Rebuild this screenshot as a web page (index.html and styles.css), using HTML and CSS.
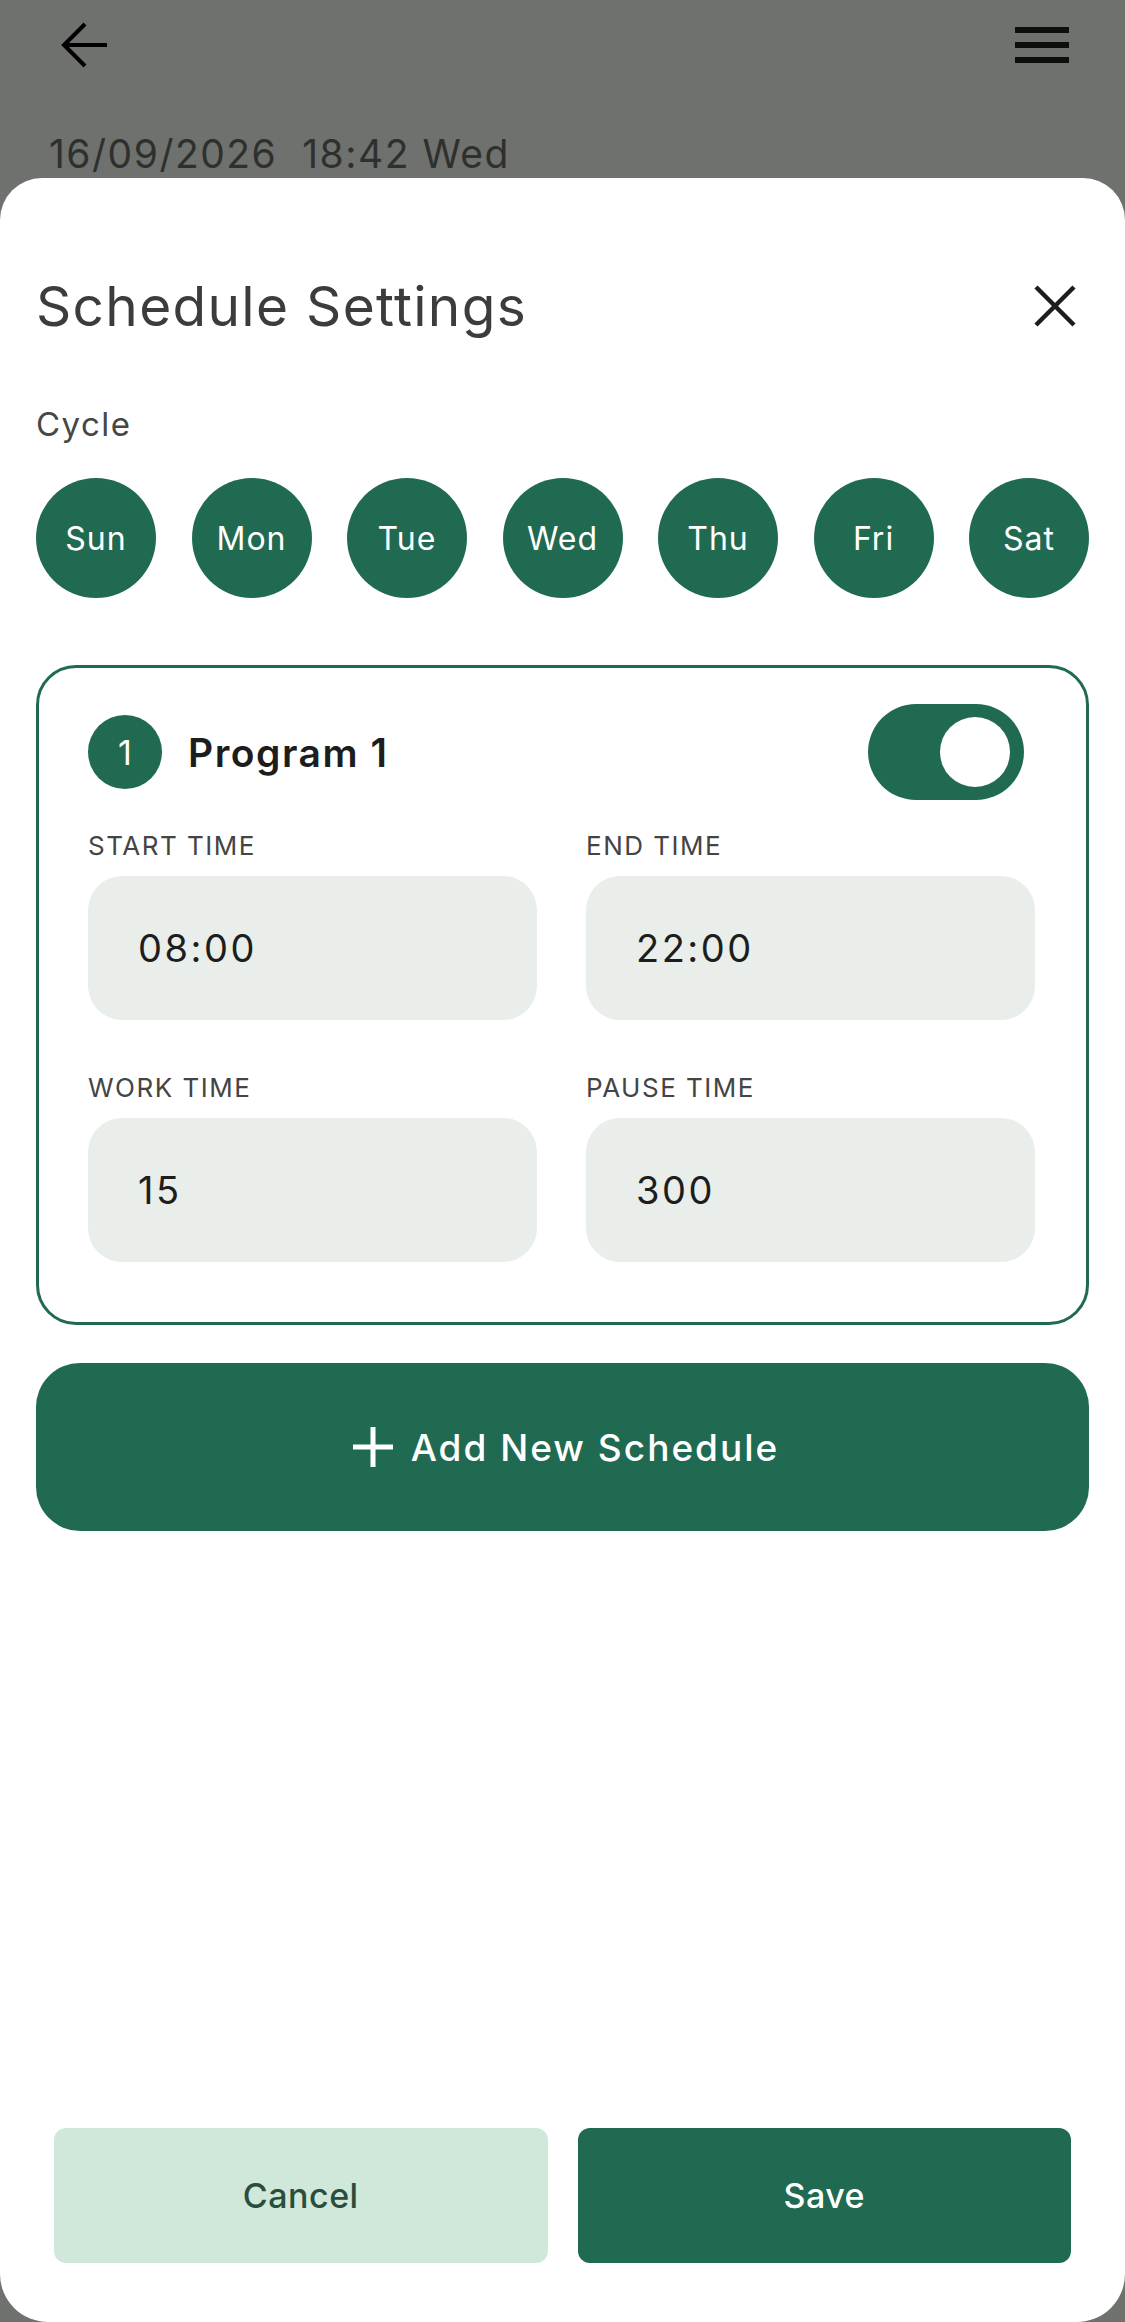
FILE: index.html
```html
<!DOCTYPE html>
<html lang="en">
<head>
    <meta charset="UTF-8">
    <meta name="viewport" content="width=device-width, initial-scale=1.0">
    <title>Schedule Settings</title>
    <link rel="stylesheet" href="styles.css">
</head>
<body>

<div class="topbar">
    <button class="icon-btn back-btn" aria-label="Back">
        <svg width="48" height="48" viewBox="0 0 48 48" fill="none" stroke="#000" stroke-width="4">
            <path d="M47 24H5"/>
            <path d="M25 3L4 24l21 21"/>
        </svg>
    </button>
    <button class="icon-btn menu-btn" aria-label="Menu">
        <span></span><span></span><span></span>
    </button>
</div>
<div class="datetime">16/09/2026&nbsp;&nbsp;18:42 Wed</div>

<div class="sheet">
    <div class="sheet-header">
        <h1>Schedule Settings</h1>
        <button class="icon-btn close-btn" aria-label="Close">
            <svg width="44" height="44" viewBox="0 0 44 44" fill="none" stroke="#1d1d1d" stroke-width="4.5">
                <path d="M3 3l38 38M41 3L3 41"/>
            </svg>
        </button>
    </div>

    <div class="cycle-label">Cycle</div>
    <div class="days">
        <button class="day active">Sun</button>
        <button class="day active">Mon</button>
        <button class="day active">Tue</button>
        <button class="day active">Wed</button>
        <button class="day active">Thu</button>
        <button class="day active">Fri</button>
        <button class="day active">Sat</button>
    </div>

    <div class="program">
        <div class="program-head">
            <span class="badge">1</span>
            <span class="program-name">Program 1</span>
            <span class="toggle on"><span class="knob"></span></span>
        </div>
        <div class="fields">
            <div class="field">
                <label>START TIME</label>
                <div class="value">08:00</div>
            </div>
            <div class="field">
                <label>END TIME</label>
                <div class="value">22:00</div>
            </div>
            <div class="field">
                <label>WORK TIME</label>
                <div class="value">15</div>
            </div>
            <div class="field">
                <label>PAUSE TIME</label>
                <div class="value">300</div>
            </div>
        </div>
    </div>

    <button class="add-btn">
        <svg width="42" height="42" viewBox="0 0 42 42" fill="none" stroke="#fff" stroke-width="5">
            <path d="M21 1v40M1 21h40"/>
        </svg>
        Add New Schedule
    </button>

    <div class="actions">
        <button class="btn-cancel">Cancel</button>
        <button class="btn-save">Save</button>
    </div>
</div>

</body>
</html>
```

FILE: styles.css
```css
* {
    box-sizing: border-box;
}
body {
    margin: 0;
    width: 1125px;
    height: 2322px;
    background-color: #6f716e;
    font-family: Inter, "Noto Sans", sans-serif;
    overflow: hidden;
}
button {
    font-family: inherit;
    border: none;
    cursor: pointer;
}
.icon-btn {
    background: none;
    padding: 0;
    display: flex;
    align-items: center;
    justify-content: center;
}
.topbar {
    height: 90px;
    display: flex;
    justify-content: space-between;
    align-items: center;
    padding: 0 56px 0 60px;
}
.back-btn {
    width: 48px;
    height: 48px;
}
.menu-btn {
    width: 54px;
    height: 40px;
    flex-direction: column;
    gap: 9px;
}
.menu-btn span {
    display: block;
    width: 54px;
    height: 6px;
    background-color: #0d0f0d;
}
.datetime {
    height: 88px;
    padding: 41px 0 0 49px;
    font-size: 39px;
    line-height: 46px;
    color: #2e302e;
    letter-spacing: 1.5px;
}
.sheet {
    height: 2144px;
    background-color: #fff;
    border-radius: 42px 42px 48px 48px;
    padding: 84px 36px 59px;
    display: flex;
    flex-direction: column;
}
.sheet-header {
    height: 88px;
    display: flex;
    justify-content: space-between;
    align-items: center;
}
.sheet-header h1 {
    margin: 0;
    font-size: 55px;
    font-weight: 400;
    color: #3a3d3b;
    letter-spacing: 1.3px;
}
.close-btn {
    width: 44px;
    height: 44px;
    margin-right: 12px;
}
.cycle-label {
    margin-top: 54px;
    font-size: 33px;
    line-height: 40px;
    color: #454745;
    letter-spacing: 1.5px;
}
.days {
    margin-top: 34px;
    display: flex;
    justify-content: space-between;
}
.day {
    width: 120px;
    height: 120px;
    border-radius: 50%;
    background-color: #eef1ee;
    color: #333;
    font-size: 32px;
    letter-spacing: 1px;
}
.day.active {
    background-color: #216a52;
    color: #fff;
}
.program {
    margin-top: 67px;
    border: 3.5px solid #216a52;
    border-radius: 40px;
    padding: 36px 51px 60px 49px;
}
.program-head {
    height: 96px;
    display: flex;
    align-items: center;
}
.badge {
    width: 74px;
    height: 74px;
    border-radius: 50%;
    background-color: #216a52;
    color: #fff;
    font-size: 34px;
    display: flex;
    align-items: center;
    justify-content: center;
}
.program-name {
    margin-left: 26px;
    font-size: 39px;
    font-weight: 600;
    color: #1d1d1d;
    letter-spacing: 1.5px;
}
.toggle {
    margin-left: auto;
    margin-right: 11px;
    width: 156px;
    height: 96px;
    border-radius: 48px;
    background-color: #ccc;
    display: flex;
    align-items: center;
    padding: 0 14px;
}
.toggle.on {
    background-color: #216a52;
    justify-content: flex-end;
}
.knob {
    width: 70px;
    height: 70px;
    border-radius: 50%;
    background-color: #fff;
}
.fields {
    display: grid;
    grid-template-columns: 1fr 1fr;
    column-gap: 49px;
    row-gap: 52px;
    margin-top: 30px;
}
.field label {
    display: block;
    font-size: 26px;
    line-height: 32px;
    letter-spacing: 1.5px;
    color: #444;
}
.value {
    margin-top: 14px;
    height: 144px;
    border-radius: 34px;
    background-color: #e9eeea;
    padding-left: 50px;
    display: flex;
    align-items: center;
    font-size: 38px;
    letter-spacing: 2.5px;
    color: #1d1d1d;
}
.add-btn {
    margin-top: 38px;
    height: 168px;
    border-radius: 44px;
    background-color: #216a52;
    color: #fff;
    font-size: 37px;
    font-weight: 500;
    letter-spacing: 2px;
    display: flex;
    align-items: center;
    justify-content: center;
    gap: 17px;
    padding-left: 12px;
}
.actions {
    margin-top: auto;
    padding: 0 18px;
    display: flex;
    gap: 30px;
}
.actions button {
    flex: 1;
    height: 135px;
    border-radius: 12px;
    font-size: 34px;
    font-weight: 500;
    letter-spacing: 0.5px;
}
.btn-cancel {
    background-color: #d0e8da;
    color: #2b4d3c;
}
.btn-save {
    background-color: #216a52;
    color: #fff;
}
```
